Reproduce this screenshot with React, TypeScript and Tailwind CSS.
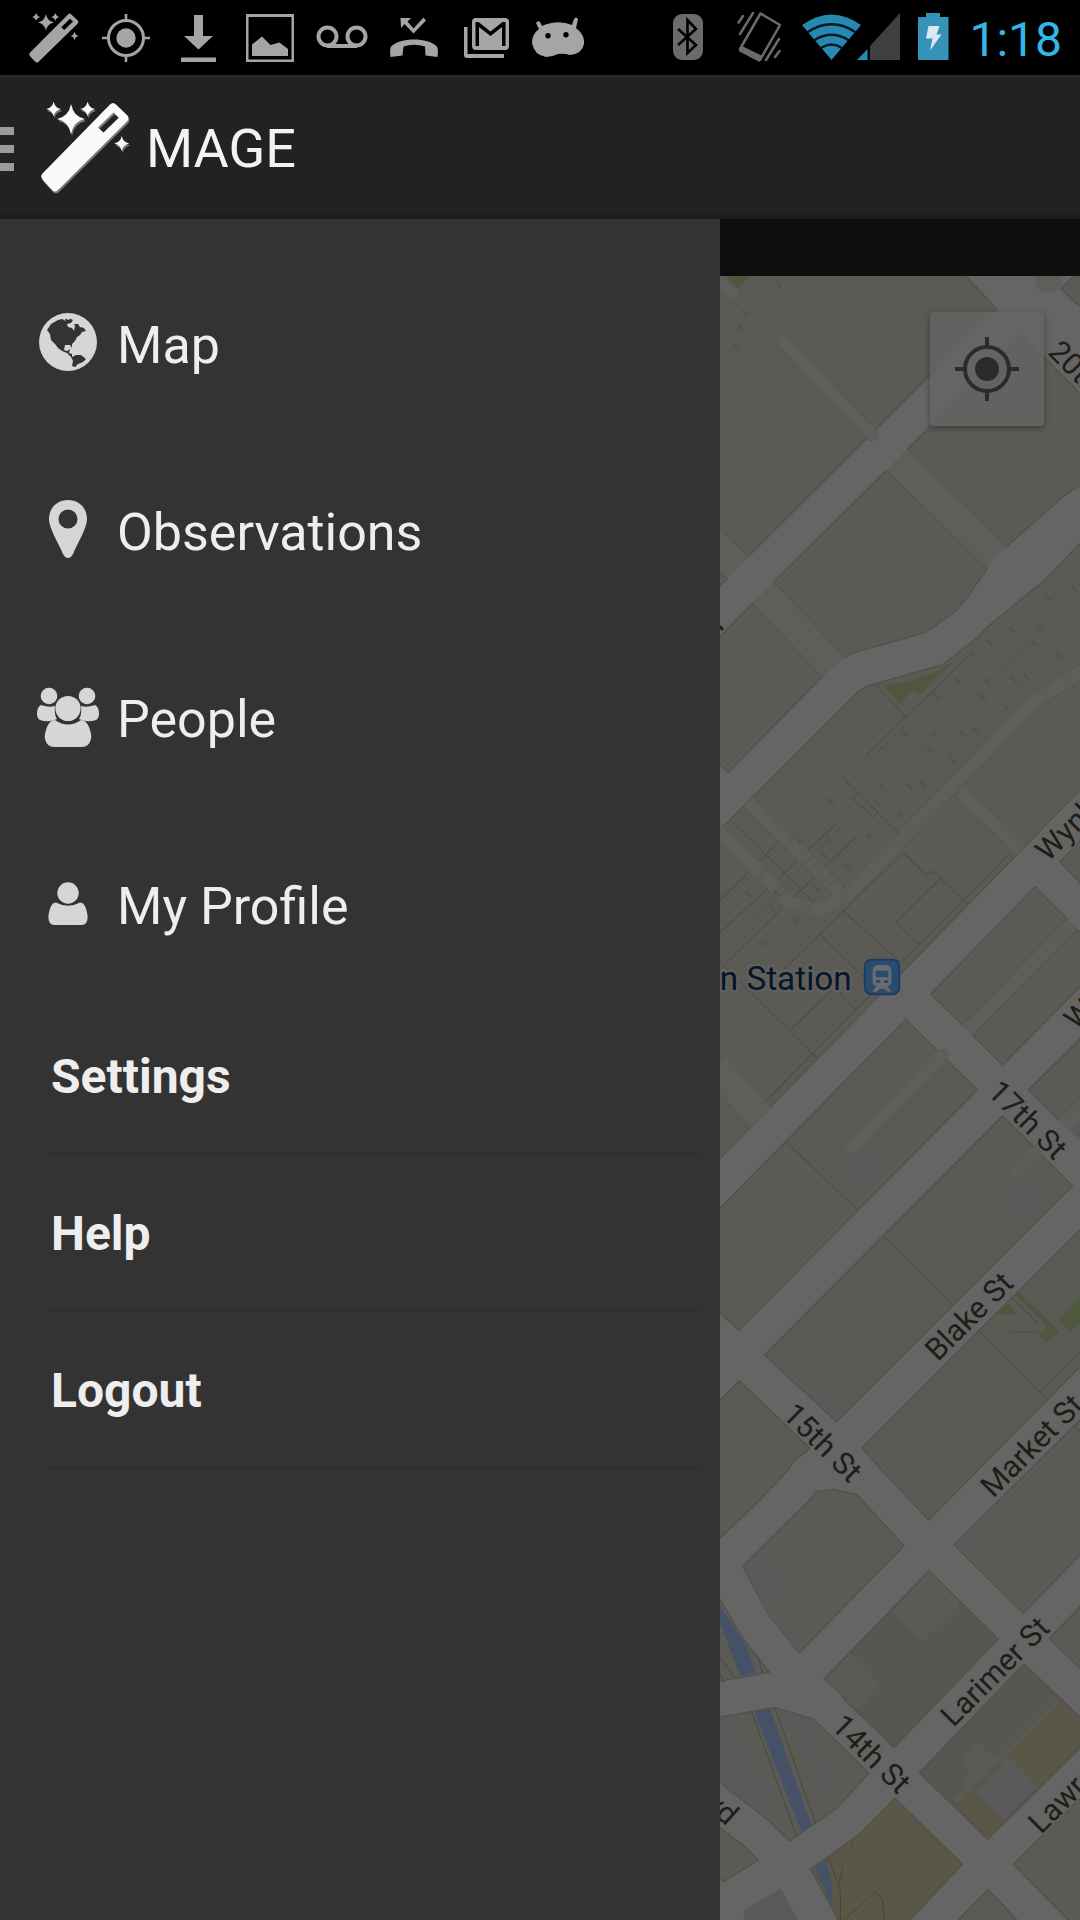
import type { ReactNode } from "react";

const STAR = "M0-10Q1.6-1.6 10 0Q1.6 1.6 0 10Q-1.6 1.6-10 0Q-1.6-1.6 0-10Z";

function WandShape() {
  return (
    <>
      <path
        fillRule="evenodd"
        d="M69 2.500Q72-.5 75 2.500L86 13Q89 16 86 19.500L17 88Q14 91 11 88L1.500 77.500Q-1 74 1.500 71.500ZM72.500 10.500L57 25.500L62.500 30.500L78 15.500Z"
      />
      <path d={STAR} transform="translate(30 17) scale(1.4 1.5)" />
      <path d={STAR} transform="translate(12.600 7) scale(.75)" />
      <path d={STAR} transform="translate(46.600 7) scale(.75)" />
      <path d={STAR} transform="translate(80.700 41.500) scale(.75)" />
    </>
  );
}

function StatusIcon({ children }: { children: ReactNode }) {
  return (
    <svg className="h-[75px] w-[72px] shrink-0 fill-[#a5a5a5]" viewBox="0 0 72 75" aria-hidden="true">
      {children}
    </svg>
  );
}

function StatusBar() {
  return (
    <div className="flex h-[75px] items-center bg-black pl-[18px] pr-[18px]">
      <StatusIcon>
        <g transform="translate(11 13) scale(.565 .555)">
          <WandShape />
        </g>
      </StatusIcon>
      <StatusIcon>
        <circle cx="36" cy="38" r="17.500" fill="none" stroke="#a5a5a5" strokeWidth="3" />
        <circle cx="36" cy="38" r="9.700" />
        <path d="M34.700 14h2.600v7h-2.600zM34.700 55h2.600v7h-2.600zM12 36.700h7v2.600h-7zM53 36.700h7v2.600h-7z" />
      </StatusIcon>
      <StatusIcon>
        <path d="M32 15h9v21h10L36.500 49.500L22 36h10zM19 57.500h35v4.500h-35z" />
      </StatusIcon>
      <StatusIcon>
        <path fillRule="evenodd" d="M12 14h48v48H12zM14.500 17v42.500h43V17z" />
        <path d="M18 56V44.500L28 36.500L36.500 45L45.500 42.500L54 49V56z" />
      </StatusIcon>
      <StatusIcon>
        <g fill="none" stroke="#a5a5a5" strokeWidth="4">
          <circle cx="21.500" cy="36.500" r="9" />
          <circle cx="50.500" cy="36.500" r="9" />
          <path d="M21 46h30" />
        </g>
      </StatusIcon>
      <StatusIcon>
        <path d="M22.500 18H33L29.500 21.500L35.500 28.500L45.500 17.500L48 20.500L35.500 33.500L26.500 24L23 28z" />
        <path d="M12.500 57Q11.500 50 13 46.500C22 37 50 37 59 46.500Q60.500 50 59.500 57L47.500 55.500L47 46.500Q36 43 25.500 46.500L24.500 55.500Z" />
      </StatusIcon>
      <StatusIcon>
        <path d="M14 27h3.500v27H54v4H17q-3 0-3-3z" />
        <path fillRule="evenodd" d="M26 18h29q4 0 4 4v24q0 4-4 4H26q-4 0-4-4V22q0-4 4-4zM25.500 22v24h3.500V27l11.500 9L52 27v19h3.500V22h-3L40.500 31.500L28.500 22z" />
      </StatusIcon>
      <StatusIcon>
        <path
          fillRule="evenodd"
          d="M14 23Q16 20 18 22L20 26Q36 19 50 25L52 19Q54 16 56 19L54 28Q63 35 62 44Q60 54 48 55Q42 53 36 54Q30 57 24 57Q12 55 10 43Q10 34 17 29ZM26 33a2.700 2.700 0 1 0 0 5.400a2.700 2.700 0 1 0 0-5.400M44 32a2.700 2.700 0 1 0 0 5.400a2.700 2.700 0 1 0 0-5.400"
        />
      </StatusIcon>
      <div className="ml-auto flex items-center">
        <StatusIcon>
          <rect x="21" y="14" width="30" height="46" rx="9" fill="#6b6b6b" />
          <path d="M26 29L44 45L35.500 53V20L44 29L26 45" fill="none" stroke="#000" strokeWidth="2.600" />
        </StatusIcon>
        <StatusIcon>
          <g fill="none" stroke="#6b6b6b" strokeWidth="2.500" strokeLinejoin="round">
            <path d="M36.500 13.500L56 25L36 60L16 49Z" />
            <path d="M16 34L29 13M14.500 22.500L19 16M42 60L55 39M51 57L55.500 51" strokeWidth="2.500" strokeLinecap="round" />
          </g>
          <path d="M17 45.500L38.500 56L35.500 62L14.500 51Z" fill="#6b6b6b" />
        </StatusIcon>
        <svg className="h-[75px] w-[110px] shrink-0" viewBox="0 0 110 75" aria-hidden="true">
          <path d="M35.500 60L6 25Q35.500 4 65 25Z" fill="#2589b2" />
          <path d="M11 32.500Q35.500 16 60 32.500M18 40.500Q35.500 29 53 40.500M25 48Q35.500 41 46 48" fill="none" stroke="#061922" strokeWidth="2.500" />
          <path d="M104 13V60H74V46Z" fill="#404040" />
          <path d="M61 60L71.500 49V60Z" fill="#2589b2" />
        </svg>
        <svg className="h-[75px] w-[63px] shrink-0" viewBox="0 0 63 75" aria-hidden="true">
          <path d="M20 13h14v4h8.500v43h-30.500V17h8z" fill="#3592b8" />
          <path d="M22.500 26h11l-3 8.500h5L24 50.500L26.500 38.500H20z" fill="#dceaf0" />
        </svg>
        <time className="pt-1 text-[48px] leading-[72px] text-[#33b5e5]">1:18</time>
      </div>
    </div>
  );
}

function ActionBar() {
  return (
    <header className="flex h-[144px] items-center border-b-4 border-t-2 border-b-[#1c1c1c] border-t-[#2b2b2b] bg-[#222222] pt-[6px]">
      <button type="button" aria-label="Close navigation drawer" className="flex items-center gap-[27px]">
        <span className="flex w-[14px] flex-col gap-[10px]">
          <span className="h-2 bg-[#9c9c9c]" />
          <span className="h-2 bg-[#9c9c9c]" />
          <span className="h-2 bg-[#9c9c9c]" />
        </span>
        <svg className="h-[94px] w-[90px] fill-[#fafafa]" viewBox="0 0 90 94" aria-hidden="true">
          <g transform="translate(1 2)" className="fill-[#777777]">
            <WandShape />
          </g>
          <WandShape />
        </svg>
      </button>
      <h1 className="pl-[15px] text-[54px] leading-[64px] text-[#f3f3f3]">MAGE</h1>
    </header>
  );
}

const globe = (
  <>
    <circle cx="30" cy="30" r="29" />
    <path
      fill="#333333"
      d="M9 18L13 12L20 8L24 7L28 9L27 6.500L31 8L32 6.500L35 8L33 11L29 12L30 15L34 16L36 19L37 14L36 12L40 12L42 15L46 16L48 19L44 20L42 23L39 25L37 29L34 32L34 36L32 33L27 33L26 38L29 39L32 37L31 41L34 42L34 45L38 43L43 43L48 47L45 50L40 52L37 55L34 54L35 49L33 45L29 41L24 39L20 36L17 32L13 28L12 22Z"
    />
  </>
);

const pin = (
  <path fillRule="evenodd" d="M30 1C41 1 49 9 49 20C49 29 41 41 35 55Q33 59 30 59Q27 59 25 55C19 41 11 29 11 20C11 9 19 1 30 1ZM30 10.500A9.500 9.500 0 1 0 30 29.500A9.500 9.500 0 1 0 30 10.500" />
);

const people = (
  <>
    <circle cx="11" cy="10" r="8.300" />
    <circle cx="49" cy="10" r="8.300" />
    <path d="M3 19Q11 22 17 20Q16 29 19 33Q11 37 2 34Q-1 32-1 28Q-1 21 3 19ZM57 19Q49 22 43 20Q44 29 41 33Q49 37 58 34Q61 32 61 28Q61 21 57 19Z" />
    <circle cx="30" cy="22.500" r="12.600" />
    <path d="M17 34Q30 43 43 34Q48 34 51 41Q54 49 53 53Q51 61 44 61H16Q9 61 7 53Q6 49 9 41Q12 34 17 34Z" />
  </>
);

const person = (
  <>
    <circle cx="30" cy="20" r="10.700" />
    <path d="M18 29.500Q30 36 42 29.500Q46 29.500 48 35.500Q50 42.500 49.500 45.500Q49 52 44 52H16Q11 52 10.500 45.500Q10 42.500 12 35.500Q14 29.500 18 29.500Z" />
  </>
);

const primary = [
  { label: "Map", icon: globe },
  { label: "Observations", icon: pin },
  { label: "People", icon: people },
  { label: "My Profile", icon: person },
];

const secondary = ["Settings", "Help", "Logout"];

function Drawer() {
  return (
    <nav className="w-2/3 shrink-0 bg-[#333333] pt-[31px] text-[#eeeeee]">
      <ul>
        {primary.map((item) => (
          <li key={item.label}>
            <a href="#" className="flex h-[187px] items-center gap-[19px] pb-[3px] pl-[38px]">
              <svg className="h-[60px] w-[60px] shrink-0 overflow-visible fill-[#d6d6d6]" viewBox="0 0 60 60" aria-hidden="true">
                {item.icon}
              </svg>
              <span className="pt-2 text-[52px] leading-[60px]">{item.label}</span>
            </a>
          </li>
        ))}
      </ul>
      <ul className="pl-[51px] pr-[21px]">
        {secondary.map((label) => (
          <li key={label}>
            <a href="#" className="flex h-[157px] items-center border-b-[3px] border-[#2e2e2e] pt-1 text-[48px] font-bold leading-[56px]">
              {label}
            </a>
          </li>
        ))}
      </ul>
    </nav>
  );
}

const blocks = [
  "M-10 10H730L830 116L85 860L-10 770Z",
  "M-10 895L22 925L-10 958Z",
  "M-10 1110L97 1000L307 1220L25 1507L-10 1475Z",
  "M160 937L500 600L802 896L740 985L710 1020L618 1087L395 1150L375 1162Z",
  "M562 538L905 193L1090 380V640L1035 675L860 830Z",
  "M1022 56L1070 10H1090V120Z",
  "M1090 810L972 932L805 1068L770 1105L668 1184L440 1248L410 1268L-10 1690V2676L1090 1550Z",
  "M1020 1775L1090 1702V1850Z",
  "M945 1850L1042 1947L728 2265L632 2172Z",
  "M1070 1977L1090 1995V2140L848 2385L757 2295Z",
  "M1090 2295L925 2460L1015 2550L1090 2475Z",
  "M557 2248L772 2460L57 3180L-10 3120V2825Z",
  "M848 2537L1058 2748L350 3455L133 3255Z",
  "M1090 2870L425 3533L478 3593L626 3750L1090 3280Z",
  "M58 3332L270 3535L215 3580L205 3600L120 3690L-10 3815V3400Z",
  "M1090 3440L702 3825L910 4030L1090 3845Z",
  "M268 3690L290 3665L340 3658L410 3673L552 3827L238 4148L148 4038L68 3888Z",
  "M988 4105L1090 4000V4205Z",
  "M1090 4575L880 4783L1055 4960H1090Z",
  "M805 4858L900 4960H705Z",
  "M-10 3970L65 4100L148 4207L-10 4235Z",
  "M-10 4343L165 4312L282 4348L447 4510L350 4615L208 4713L150 4655L-10 4530Z",
  "M-10 4665L75 4730L115 4770L10 4835L-10 4820Z",
];

const alleys = [
  "M-10 770L85 860L22 925L-10 895Z",
  "M97 1000L160 937L375 1162L307 1220Z",
  "M500 600L562 538L860 830L820 865L802 896Z",
  "M1042 1947L1070 1977L757 2295L728 2265Z",
  "M1015 2550L1045 2580L1090 2540V2475Z",
];

const greyLots = [
  "M1045 2580L1090 2535V2620Z",
  "M430 2620L515 2700L440 2780L350 2690Z",
  "M950 2710L1005 2780L910 2880L815 2785Z",
  "M285 3335L370 3425L350 3452L260 3370Z",
  "M125 3845L225 3940L165 4000L268 4100L238 4146L148 4038L70 3888Z",
  "M770 3760L810 3790L740 3855L705 3825Z",
  "M-10 4345L40 4338L180 4600L150 4650L-10 4528Z",
  "M172 4316L282 4350L378 4560L330 4625Z",
  "M182 4855L240 4960H80L68 4925Z",
];

const parks = [
  "M15 10H100L55 56Z",
  "M490 1243L555 1236L640 1210L702 1174L600 1275L577 1263L538 1302Z",
  "M862 3098L895 3134H822Z",
  "M893 3062L1018 3184L980 3217L950 3188L858 3186V3183L978 3184V3165L890 3080Z",
  "M1090 3070L1015 3147L1048 3188L1090 3150Z",
];

const canals = [
  "M-10 3990L20 4040L80 4130L108 4208L62 4218L-10 4035Z",
  "M103 4325L150 4316L273 4665L245 4687Z",
  "M285 4795L318 4772L333 4830L336 4905Z",
];

const buildingLines = [
  "M466 1243L557 1340L438 1457",
  "M557 1340L640 1262L762 1143",
  "M367 1521L536 1690M415 1570L397 1586L460 1641L472 1628",
  "M264 1740L355 1656M315 1790L412 1697",
  "M36 1654L278 1894M118 1775L175 1716M172 1830L232 1771M222 1880L285 1820",
  "M-5 1895L85 1808M-5 1992L138 1860M18 2080L188 1914M190 2100L550 1747L620 1816L642 1803L662 1825L528 1957L598 2025",
  "M662 1825L742 1902M540 2080L730 1890L866 1753L880 1765M370 1923L540 2075M298 1992L430 2120M-5 2070L290 2363M170 2460L500 2125M345 2155L408 2220M340 2155L215 2277",
  "M200 2430L140 2492",
  "M200 2617L410 2818M490 2898L697 3105M775 3183L978 3387M958 3365L1090 3235M877 3083L957 3162M1060 3465L1090 3495",
  "M-5 4155L45 4225M-5 4200L12 4238M115 4165L128 4210",
  "M96 4328L230 4700M166 4316L287 4660",
  "M325 4765L361 4860V4960M368 4790L357 4845M372 4950L466 4865L487 4888L494 4960M395 4715L398 4735",
];

const rails = [
  "M190 10Q170 80 95 180L-10 290M150 10Q130 80 60 175L-10 250",
  "M1090 940L985 985L877 1080L713 1233L490 1436L250 1670L0 1955",
  "M1090 1010L962 1075L787 1280L629 1438L471 1598L313 1757L60 1980",
  "M1090 1040L945 1120L800 1233L643 1390L486 1550L327 1708L168 1867L75 2000",
  "M1090 1060L920 1220L764 1380L606 1540L447 1698L291 1857L120 2030",
  "M1090 1090L857 1313L699 1473L541 1633L383 1792L225 1952L140 2035",
];

const railTies = [
  [175, 43], [75, 128], [64, 172], [46, 227], [1062, 955], [985, 985], [877, 1080], [806, 1117], [962, 1075],
  [945, 1120], [1018, 1157], [713, 1233], [648, 1276], [556, 1394], [490, 1436], [332, 1594], [240, 1714],
  [85, 1873], [800, 1233], [787, 1280], [643, 1390], [629, 1438], [486, 1550], [471, 1598], [327, 1708],
  [313, 1757], [168, 1867], [155, 1916], [882, 1230], [920, 1220], [857, 1313], [764, 1380], [726, 1390],
  [699, 1473], [606, 1540], [568, 1550], [541, 1633], [447, 1698], [383, 1792], [291, 1857], [225, 1952], [131, 2018],
];

const streets = [
  { name: "20th St", x: 980, y: 250, angle: 45 },
  { name: "Wynkoop St", x: 984, y: 1778, angle: -45 },
  { name: "Wazee St", x: 1070, y: 2284, angle: -45 },
  { name: "17th St", x: 799, y: 2470, angle: 45 },
  { name: "Blake St", x: 653, y: 3277, angle: -45 },
  { name: "Market St", x: 820, y: 3686, angle: -45 },
  { name: "15th St", x: 184, y: 3438, angle: 45 },
  { name: "14th St", x: 330, y: 4372, angle: 45 },
  { name: "Larimer St", x: 700, y: 4374, angle: -45 },
  { name: "Lawrence St", x: 963, y: 4695, angle: -45 },
];

function CityMap() {
  return (
    <svg
      className="block aspect-[1080/4932] w-full bg-[#656565] font-[Roboto]"
      viewBox="0 18 1080 4932"
      preserveAspectRatio="xMinYMin slice"
      role="img"
      aria-label="Street map around Union Station"
    >
      <g fill="#5c5a55" stroke="#53514c" strokeWidth="4">
        {blocks.map((d) => (
          <path key={d} d={d} />
        ))}
        <path d="M627 3902L835 4107L522 4433L375 4290L355 4264L312 4227Z" fill="#575650" />
        <path d="M912 4182L1090 4350V4425L803 4708L598 4508Z" fill="#575650" />
        <path d="M525 4585L728 4783L560 4960H360L272 4797L415 4695Z" fill="#5a5648" />
      </g>
      <path d="M517 4022L627 3905L722 4002L607 4115ZM390 4150L480 4242L413 4318L314 4227ZM768 4415L830 4470L702 4600L745 4550L725 4535L750 4510L722 4480Z" fill="#5c5a55" />
      <path d="M1022 4297L1088 4360V4425L803 4706L702 4604Z" fill="#5a5648" />
      <path d="M1010 4287L1022 4299L712 4600L702 4590Z" fill="#5c5a55" />
      <path d="M867 4460L952 4550L850 4652L763 4565Z" fill="#5a5a5a" />
      <g fill="#5a5a59">
        {greyLots.map((d) => (
          <path key={d} d={d} />
        ))}
      </g>
      <g fill="#605e5b">
        {alleys.map((d) => (
          <path key={d} d={d} />
        ))}
        <circle cx="985" cy="30" r="40" />
      </g>
      <g fill="none" strokeLinejoin="round">
        <g stroke="#585651">
          <path d="M190 215L455 494" strokeWidth="40" strokeLinecap="round" />
          <path d="M-10 25L40 72" strokeWidth="40" strokeLinecap="round" />
          <path d="M1090 1200L950 1290L720 1525L385 1870L300 1920L210 1898L-10 1680M86 1597L357 1862M720 1564L903 1737" strokeWidth="44" />
          <path d="M-10 2392L121 2542" strokeWidth="88" />
        </g>
        <g stroke="#605e5b">
          <path d="M190 215L457 496" strokeWidth="36" strokeLinecap="round" />
          <path d="M-10 25L40 72" strokeWidth="36" strokeLinecap="round" />
          <path d="M1090 1200L950 1290L720 1525L385 1870L300 1920L210 1898L-10 1680M84 1595L357 1862M720 1564L905 1739" strokeWidth="40" />
          <path d="M-10 2392L123 2544" strokeWidth="84" />
          <path d="M669 2353L395 2630M957 2638L893 2700" strokeWidth="36" strokeLinecap="round" />
        </g>
      </g>
      <g fill="#4f573f">
        {parks.map((d) => (
          <path key={d} d={d} />
        ))}
      </g>
      <g fill="#445167">
        {canals.map((d) => (
          <path key={d} d={d} />
        ))}
      </g>
      <g fill="none" stroke="#595958" strokeWidth="9" strokeOpacity=".7">
        {rails.map((d) => (
          <path key={d} d={d} />
        ))}
      </g>
      <g stroke="#535352" strokeWidth="8">
        {railTies.map(([x, y]) => (
          <path key={`${x}-${y}`} d={`M${x - 9} ${y - 8}l18 16`} />
        ))}
      </g>
      <g fill="none" stroke="#403f38" strokeWidth="2">
        {buildingLines.map((d) => (
          <path key={d} d={d} />
        ))}
      </g>
      <g fill="#1f1d16" stroke="#646464" strokeWidth="10" strokeLinejoin="round" paintOrder="stroke" fontSize="91">
        {streets.map((s) => (
          <text key={s.name} x={s.x} y={s.y} transform={`rotate(${s.angle} ${s.x} ${s.y})`}>
            {s.name}
          </text>
        ))}
        <text x="20" y="4670" textAnchor="end" transform="rotate(42 20 4670)">
          Blvd
        </text>
      </g>
      <path d="M-4 1066L9 1080" stroke="#1f1d16" strokeWidth="8" />
      <text x="395" y="2161" textAnchor="end" fontSize="100" fill="#06162a" stroke="#605f5d" strokeWidth="16" strokeLinejoin="round" paintOrder="stroke">
        Union Station
      </text>
      <rect x="434" y="2069" width="104" height="104" rx="20" fill="#284b6f" stroke="#1c3a5b" strokeWidth="5" />
      <path
        fillRule="evenodd"
        fill="#6a6d70"
        d="M474 2085H498Q514 2087 514 2102V2136Q514 2146 502 2148L515 2165H503L493 2156H479L469 2165H457L470 2148Q458 2146 458 2136V2102Q458 2087 474 2085ZM467 2102V2122H505V2102ZM468 2130V2139H481V2130ZM492 2130V2139H505V2130Z"
      />
    </svg>
  );
}

function MapPane() {
  return (
    <main className="min-w-0 flex-1 overflow-hidden bg-[#0e0e0e] pt-[57px]">
      <div className="relative">
        <CityMap />
        <button
          type="button"
          aria-label="My location"
          className="absolute right-[36px] top-[36px] flex h-[114px] w-[114px] items-center justify-center rounded bg-[#666666]/75 shadow-[0_2px_6px_rgba(0,0,0,0.35)]"
        >
          <svg className="h-16 w-16 fill-[#2b2b2b]" viewBox="0 0 64 64" aria-hidden="true">
            <circle cx="32" cy="32" r="22" fill="none" stroke="#2b2b2b" strokeWidth="4" />
            <circle cx="32" cy="32" r="12" />
            <path d="M30 0h4v9h-4zM30 55h4v9h-4zM0 30h9v4H0zM55 30h9v4h-9z" />
          </svg>
        </button>
      </div>
    </main>
  );
}

export default function App() {
  return (
    <div className="flex min-h-screen flex-col bg-[#333333] font-[Roboto,sans-serif]">
      <StatusBar />
      <ActionBar />
      <div className="flex flex-1">
        <Drawer />
        <MapPane />
      </div>
    </div>
  );
}
